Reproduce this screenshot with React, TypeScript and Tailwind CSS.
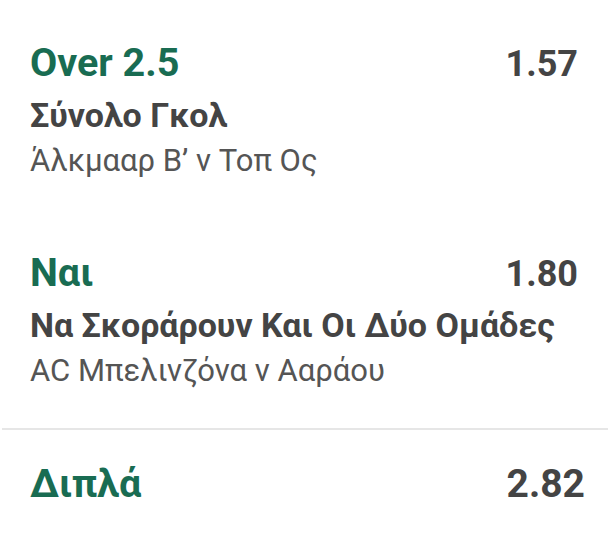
export default function App() {
  const picks = [
    { sel: 'Over 2.5', odds: '1.57', market: 'Σύνολο Γκολ', event: 'Άλκμααρ Β’ ν Τοπ Ος' },
    { sel: 'Ναι', odds: '1.80', market: 'Να Σκοράρουν Και Οι Δύο Ομάδες', event: 'AC Μπελινζόνα ν Ααράου' },
  ];

  return (
    <div className="w-[608px] h-[534px] bg-white overflow-hidden" style={{ fontFamily: 'Roboto, "Noto Sans", sans-serif' }}>
      <div className="pt-[40px] pl-[30px] pr-[30px] flex flex-col gap-[69px]">
        {picks.map((p) => (
          <div key={p.odds} className="flex flex-col">
            <div className="flex items-baseline justify-between">
              <span className="text-[39.5px] leading-[46px] font-bold text-[#196c52]">{p.sel}</span>
              <span className="text-[36px] leading-[46px] font-bold text-[#444444]">{p.odds}</span>
            </div>
            <div className="mt-[7px] text-[34px] leading-[42px] font-bold text-[#444444]">{p.market}</div>
            <div className="mt-[5px] text-[31px] leading-[40px] text-[#555555]">{p.event}</div>
          </div>
        ))}
      </div>

      {/* total */}
      <div className="mt-[37px] ml-[2px] border-t-2 border-[#e6e6e6]">
        <div className="flex items-baseline justify-between pl-[28px] pr-[23px] pt-[31px]">
          <span className="text-[39.5px] leading-[46px] font-bold text-[#196c52]">Διπλά</span>
          <span className="text-[39px] leading-[46px] font-bold text-[#444444]">2.82</span>
        </div>
      </div>
    </div>
  );
}
